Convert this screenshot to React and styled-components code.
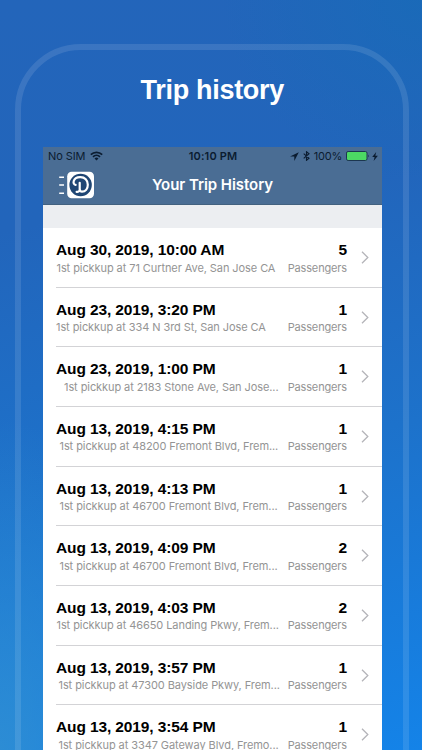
import styled, { createGlobalStyle } from "styled-components";

const trips = [
  { date: "Aug 30, 2019, 10:00 AM", pickup: "1st pickkup at 71 Curtner Ave, San Jose CA", indent: 0.5, passengers: 5 },
  { date: "Aug 23, 2019, 3:20 PM", pickup: "1st pickkup at 334 N 3rd St, San Jose CA", indent: 0, passengers: 1 },
  { date: "Aug 23, 2019, 1:00 PM", pickup: "1st pickkup at 2183 Stone Ave, San Jose...", indent: 8, passengers: 1 },
  { date: "Aug 13, 2019, 4:15 PM", pickup: "1st pickkup at 48200 Fremont Blvd, Frem...", indent: 3.5, passengers: 1 },
  { date: "Aug 13, 2019, 4:13 PM", pickup: "1st pickkup at 46700 Fremont Blvd, Frem...", indent: 3.5, passengers: 1 },
  { date: "Aug 13, 2019, 4:09 PM", pickup: "1st pickkup at 46700 Fremont Blvd, Frem...", indent: 3.5, passengers: 2 },
  { date: "Aug 13, 2019, 4:03 PM", pickup: "1st pickkup at 46650 Landing Pkwy, Frem...", indent: 0.5, passengers: 2 },
  { date: "Aug 13, 2019, 3:57 PM", pickup: "1st pickkup at 47300 Bayside Pkwy, Frem...", indent: 2.5, passengers: 1 },
  { date: "Aug 13, 2019, 3:54 PM", pickup: "1st pickkup at 3347 Gateway Blvd, Fremo...", indent: 2.5, passengers: 1 },
];

export default function App() {
  return (
    <>
      <GlobalStyle />
      <Page>
        <Frame>
          <Title>Trip history</Title>
          <Screen>
            <Header>
              <StatusBar />
              <NavBar>
                <MenuLogo />
                <h2>Your Trip History</h2>
              </NavBar>
            </Header>
            <Spacer />
            <List>
              {trips.map((trip) => (
                <Trip key={trip.date} trip={trip} />
              ))}
            </List>
          </Screen>
        </Frame>
      </Page>
    </>
  );
}

function StatusBar() {
  return (
    <Status>
      <Carrier>
        No SIM
        <svg width="13" height="10" viewBox="0 0 13 10">
          <g fill="none" stroke="#0b1c30" strokeWidth="1.7">
            <path d="M0.8 3.6 A8.2 8.2 0 0 1 12.2 3.6" />
            <path d="M3 5.9 A5 5 0 0 1 10 5.9" />
          </g>
          <path d="M4.5 7.5 A2.9 2.9 0 0 1 8.5 7.5 L6.5 9.6 Z" fill="#0b1c30" />
        </svg>
      </Carrier>
      <Clock>10:10 PM</Clock>
      <Indicators>
        <svg width="9" height="9" viewBox="0 0 9 9">
          <path d="M8.8 0.2 L0 4.6 H4.3 V9 Z" fill="#0b1c30" />
        </svg>
        <svg width="7" height="10" viewBox="0 0 7 10">
          <path d="M0.7 2.7 L6 7.3 L3.5 9.3 V0.7 L6 2.7 L0.7 7.3" fill="none" stroke="#0b1c30" strokeWidth="1.1" />
        </svg>
        <span>100%</span>
        <svg width="24" height="10" viewBox="0 0 24 10">
          <rect x="0.5" y="0.5" width="20.5" height="9" rx="1.6" fill="#4cd964" stroke="#1c3650" />
          <path d="M22.2 3.4 Q24 5 22.2 6.6 Z" fill="#1c3650" />
        </svg>
        <svg width="6" height="9" viewBox="0 0 6 9">
          <path d="M4.2 0 L0.2 5.1 H2.6 L1.6 9 L5.9 3.7 H3.3 Z" fill="#0b1c30" />
        </svg>
      </Indicators>
    </Status>
  );
}

function MenuLogo() {
  return (
    <Logo width="36" height="28" viewBox="0 0 36 28">
      <path d="M0.2 6.3 H5 M0.2 14 H5 M0.2 22.2 H5" stroke="#fff" strokeWidth="1.5" />
      <rect x="8.2" y="0.7" width="26.8" height="26.6" rx="4.5" fill="#fff" />
      <circle cx="21.6" cy="14" r="11.2" fill="#1f4674" />
      <path
        d="M16.6 13.9 C13.3 13.6 13.5 6.4 21 6.2 C26 6 28.8 9.6 28.8 13.7 C28.8 17.8 26.3 20.6 23 20.7 C21.2 20.7 20.7 19.6 20.7 18 V11.8 M20.7 18.5 C20.6 20.2 19.4 21 17.6 20.8"
        fill="none"
        stroke="#fff"
        strokeWidth="2.2"
        strokeLinecap="round"
        strokeLinejoin="round"
      />
    </Logo>
  );
}

function Trip({ trip }) {
  return (
    <Row>
      <Info>
        <h3>{trip.date}</h3>
        <Pickup $indent={trip.indent}>{trip.pickup}</Pickup>
      </Info>
      <Passengers>
        <h3>{trip.passengers}</h3>
        <p>Passengers</p>
      </Passengers>
      <svg width="8" height="13" viewBox="0 0 8 13">
        <path d="M1 0.8 L6.8 6.5 L1 12.2" fill="none" stroke="#b4b4b9" strokeWidth="1.3" />
      </svg>
    </Row>
  );
}

const GlobalStyle = createGlobalStyle`
  * {
    box-sizing: border-box;
    margin: 0;
    padding: 0;
  }
  body {
    overflow: hidden;
    background-color: #2267bc;
  }
`;
const Page = styled.div`
  height: 750px;
  width: 422px;
  padding: 44px 13px 0 15px;
  overflow: hidden;
  font-family: "Inter", sans-serif;
  background:
    radial-gradient(ellipse 180px 330px at 0 100%, rgba(52, 145, 208, 0.75), rgba(52, 145, 208, 0)),
    radial-gradient(ellipse 200px 180px at 100% 0, rgba(24, 107, 184, 0.8), rgba(24, 107, 184, 0)),
    linear-gradient(170deg, #2365ba 0%, #2265bb 28%, #1d72cb 60%, #1483e8 100%);
`;
const Frame = styled.div`
  height: 780px;
  padding: 0 21.5px 0 22px;
  border: 6px solid rgba(255, 255, 255, 0.11);
  border-radius: 66px;
`;
const Title = styled.h1`
  height: 97px;
  padding-top: 25px;
  color: #fff;
  font-family: "Liberation Sans", Arial, sans-serif;
  font-size: 27px;
  line-height: 31px;
  font-weight: 700;
  text-align: center;
  letter-spacing: -0.3px;
`;
const Screen = styled.div`
  width: 339px;
  height: 603px;
  overflow: hidden;
  background-color: #fff;
`;
const Header = styled.div`
  height: 58px;
  color: #0b1c30;
  background-color: #4a6d94;
  border-bottom: 1px solid #42617f;
`;
const Status = styled.div`
  display: grid;
  grid-template-columns: 1fr auto 1fr;
  align-items: center;
  height: 18px;
  padding: 0 4px 0 5px;
  font-size: 11px;
  line-height: 18px;
`;
const Carrier = styled.div`
  display: flex;
  align-items: center;
  gap: 5px;
  letter-spacing: -0.1px;
`;
const Clock = styled.div`
  font-weight: 600;
  letter-spacing: 0.15px;
`;
const Indicators = styled.div`
  display: flex;
  align-items: center;
  justify-content: flex-end;
  gap: 4px;
  letter-spacing: -0.2px;
  svg:last-child {
    margin-left: -2px;
  }
`;
const NavBar = styled.div`
  display: grid;
  grid-template-columns: 52px 1fr 52px;
  align-items: center;
  height: 39px;
  h2 {
    color: #fff;
    font-size: 15px;
    line-height: 20px;
    font-weight: 600;
    text-align: center;
    white-space: nowrap;
    letter-spacing: -0.06px;
  }
`;
const Logo = styled.svg`
  margin-left: 16px;
`;
const Spacer = styled.div`
  height: 23px;
  background-color: #eceef1;
`;
const List = styled.div`
  padding-left: 13px;
`;
const Row = styled.div`
  display: flex;
  align-items: flex-start;
  height: 59.67px;
  padding: 13px 13px 0 0;
  border-bottom: 1px solid #d3d3d6;
  h3 {
    color: #000;
    font-family: "Liberation Sans", Arial, sans-serif;
    font-size: 15.5px;
    line-height: 18px;
    font-weight: 700;
    letter-spacing: -0.12px;
  }
  svg {
    margin: 10px 0 0 13px;
  }
`;
const Info = styled.div`
  flex: 1;
  min-width: 0;
  white-space: nowrap;
`;
const Pickup = styled.p`
  padding-left: ${(props) => props.$indent}px;
  margin-top: 1.5px;
  color: #949494;
  font-size: 11px;
  line-height: 15px;
  letter-spacing: -0.08px;
`;
const Passengers = styled.div`
  padding-right: 1px;
  text-align: right;
  p {
    margin-top: 1.5px;
    color: #949494;
    font-size: 11px;
    line-height: 15px;
    letter-spacing: -0.15px;
  }
`;
